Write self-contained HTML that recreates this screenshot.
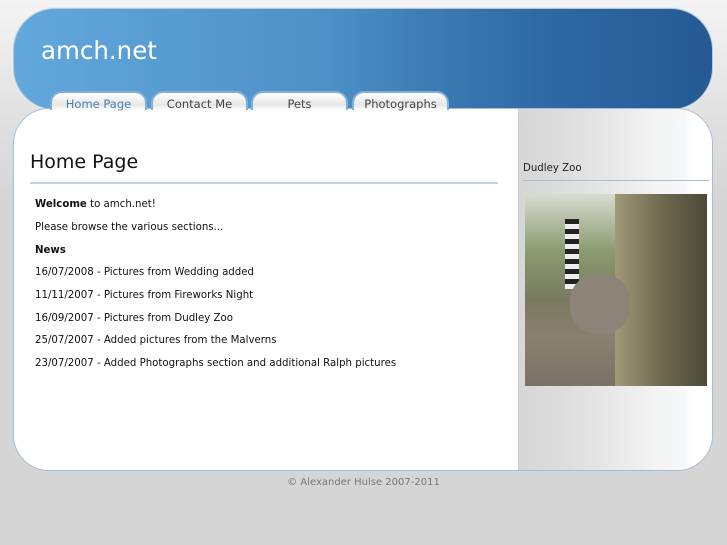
<!DOCTYPE html>
<html><head><style>
body{margin:0;width:727px;height:545px;background:linear-gradient(#f4f4f4 0,#e0e0e0 120px,#d5d5d5 200px,#d5d5d5);font-family:"DejaVu Sans",Verdana,sans-serif;position:relative;overflow:hidden}
.hdr{position:absolute;left:13px;top:8px;width:698px;height:100px;border:1px solid #b8c8d8;border-radius:42px;background:linear-gradient(90deg,#62a8dc,#4d90c6 45%,#3c7bb3 60%,#2f6aa4 75%,#255a93);box-shadow:0 0 0 1px #e8eef4}
.logo{position:absolute;left:41px;top:36px;color:#fff;font-size:24.5px}
.tab{position:absolute;top:91px;height:19px;width:97px;border-radius:12px 12px 0 0;background:linear-gradient(#fff,#e6e6e6 70%,#fff);border:2px solid #7fb0dc;border-bottom:none;text-align:center;font-size:11.5px;color:#444;line-height:23px;box-sizing:border-box}
.body{position:absolute;left:13px;top:108px;width:698px;height:361px;border:1px solid #a9bdd2;border-radius:36px;background:#fff;overflow:hidden}
.side{position:absolute;left:504px;top:0;width:194px;height:361px;border-left:1px solid #ccc;background:linear-gradient(90deg,#d6d6d6,#dcdcdc 20%,#e2e2e2 35%,#ebebeb 55%,#f3f3f3 70%,#f5f7f8 85%,#fff 90%)}
h1{position:absolute;left:30px;top:151px;margin:0;font-weight:normal;font-size:19px;color:#111}
.hr{position:absolute;left:30px;top:182px;width:468px;height:2px;background:#c7d3df}
.c{position:absolute;left:35px;font-size:10.2px;color:#111}
</style></head><body>
<div class="hdr"></div>
<div class="logo">amch.net</div>
<div class="body"><div class="side"></div></div>
<div class="tab" style="left:50px;color:#4a80b4">Home Page</div>
<div class="tab" style="left:151px">Contact Me</div>
<div class="tab" style="left:251px">Pets</div>
<div class="tab" style="left:352px">Photographs</div>
<h1>Home Page</h1>
<div class="hr"></div>
<div class="c" style="top:199px"><b>Welcome</b> to amch.net!</div>
<div class="c" style="top:222px">Please browse the various sections...</div>
<div class="c" style="top:245px"><b>News</b></div>
<div class="c" style="top:267px">16/07/2008 - Pictures from Wedding added</div>
<div class="c" style="top:290px">11/11/2007 - Pictures from Fireworks Night</div>
<div class="c" style="top:313px">16/09/2007 - Pictures from Dudley Zoo</div>
<div class="c" style="top:335px">25/07/2007 - Added pictures from the Malverns</div>
<div class="c" style="top:358px">23/07/2007 - Added Photographs section and additional Ralph pictures</div>
<div style="position:absolute;left:523px;top:163px;font-size:10.2px;color:#222">Dudley Zoo</div>
<div style="position:absolute;left:523px;top:180px;width:186px;height:1px;background:#a9bdd2"></div>
<div style="position:absolute;left:525px;top:194px;width:182px;height:192px;background:linear-gradient(180deg,#d8dccf 0,#8a9a70 30%,#7a7a60 55%,#8a8070 75%,#7a7266 100%)">
<div style="position:absolute;left:90px;top:0;width:92px;height:192px;background:linear-gradient(90deg,#a09a78,#6f6a50 50%,#4a4a38)"></div>
<div style="position:absolute;left:40px;top:25px;width:14px;height:70px;background:repeating-linear-gradient(#222 0,#222 5px,#eee 5px,#eee 10px)"></div>
<div style="position:absolute;left:45px;top:80px;width:60px;height:60px;border-radius:45%;background:#8c8478"></div>
</div>
<div style="position:absolute;left:0;top:477px;width:727px;text-align:center;font-size:10px;color:#777">© Alexander Hulse 2007-2011</div>
</body></html>
